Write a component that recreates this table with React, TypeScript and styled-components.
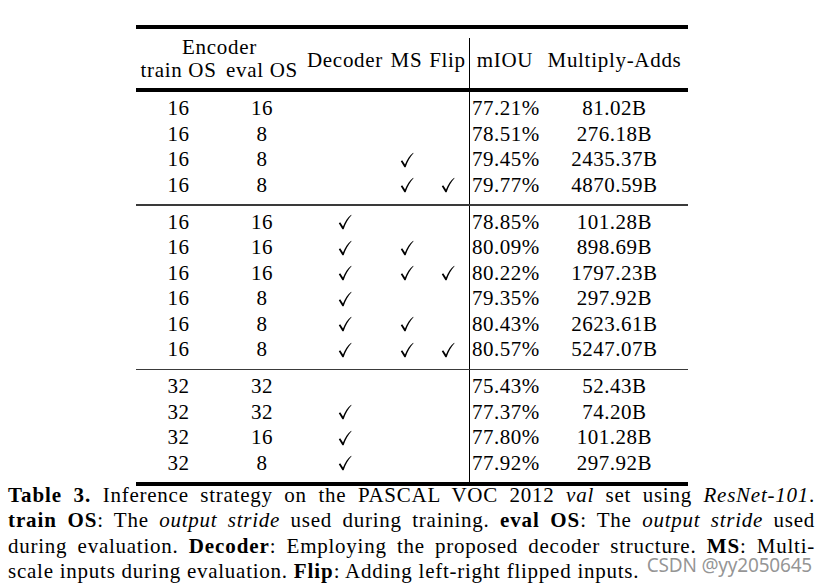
import React from 'react';
import styled, { createGlobalStyle } from 'styled-components';

const GlobalStyle = createGlobalStyle`
  html, body {
    margin: 0;
    padding: 0;
    background: #fff;
  }
  body {
    font-family: 'Liberation Serif', 'DejaVu Serif', serif;
    color: #000;
  }
`;

type Row = {
  train: string;
  evalOs: string;
  decoder?: boolean;
  ms?: boolean;
  flip?: boolean;
  miou: string;
  adds: string;
};

const sections: Row[][] = [
  [
    { train: '16', evalOs: '16', miou: '77.21%', adds: '81.02B' },
    { train: '16', evalOs: '8', miou: '78.51%', adds: '276.18B' },
    { train: '16', evalOs: '8', ms: true, miou: '79.45%', adds: '2435.37B' },
    { train: '16', evalOs: '8', ms: true, flip: true, miou: '79.77%', adds: '4870.59B' },
  ],
  [
    { train: '16', evalOs: '16', decoder: true, miou: '78.85%', adds: '101.28B' },
    { train: '16', evalOs: '16', decoder: true, ms: true, miou: '80.09%', adds: '898.69B' },
    { train: '16', evalOs: '16', decoder: true, ms: true, flip: true, miou: '80.22%', adds: '1797.23B' },
    { train: '16', evalOs: '8', decoder: true, miou: '79.35%', adds: '297.92B' },
    { train: '16', evalOs: '8', decoder: true, ms: true, miou: '80.43%', adds: '2623.61B' },
    { train: '16', evalOs: '8', decoder: true, ms: true, flip: true, miou: '80.57%', adds: '5247.07B' },
  ],
  [
    { train: '32', evalOs: '32', miou: '75.43%', adds: '52.43B' },
    { train: '32', evalOs: '32', decoder: true, miou: '77.37%', adds: '74.20B' },
    { train: '32', evalOs: '16', decoder: true, miou: '77.80%', adds: '101.28B' },
    { train: '32', evalOs: '8', decoder: true, miou: '77.92%', adds: '297.92B' },
  ],
];

const COLS = '85px 82px 84px 39px 43px 72px 147px';

const Page = styled.div`
  position: relative;
  width: 824px;
  height: 588px;
  padding-top: 25px;
  box-sizing: border-box;
  overflow: hidden;
  font-family: 'Liberation Serif', 'DejaVu Serif', serif;
`;

const Table = styled.div`
  width: 552px;
  margin: 0 auto;
  font-size: 21px;
  letter-spacing: 0.5px;
`;

const Rule = styled.div<{ $heavy?: boolean }>`
  height: ${(p) => (p.$heavy ? '4px' : '1.5px')};
  background: ${(p) => (p.$heavy ? '#000' : '#3a3a3a')};
`;

const Header = styled.div`
  display: grid;
  grid-template-columns: ${COLS};
  grid-template-rows: 21px 25px;
  padding: 8px 0 5px;
  letter-spacing: 0.7px;
  background: linear-gradient(#000, #000) no-repeat 333px 9px / 1px 100%;
`;

const HeadCell = styled.div<{ $span?: number; $rows?: number }>`
  grid-column: span ${(p) => p.$span ?? 1};
  grid-row: span ${(p) => p.$rows ?? 1};
  display: flex;
  align-items: center;
  justify-content: center;
  white-space: nowrap;
  line-height: 1;
`;

const Section = styled.div`
  display: grid;
  grid-template-columns: ${COLS};
  grid-auto-rows: 25.5px;
  padding: 4px 0 6px;
  background: linear-gradient(#000, #000) no-repeat 333px 0 / 1px 100%;
`;

const Cell = styled.div<{ $left?: boolean }>`
  display: flex;
  align-items: center;
  justify-content: ${(p) => (p.$left ? 'flex-start' : 'center')};
  padding-left: ${(p) => (p.$left ? '3px' : '0')};
  white-space: nowrap;
`;

const Check = () => (
  <svg width="14" height="16" viewBox="0 0 14 16">
    <path
      d="M0.8 9.2 L2.2 8.3 L5 12.6 C7 7.6 9.6 3.6 13.2 0.8 L13.5 1.2 C10.4 4.5 7.6 9.5 5.6 15.2 L4.4 15.2 Z"
      fill="#000"
    />
  </svg>
);

const Caption = styled.div`
  width: 807px;
  margin: -3px 0 0 8px;
  font-size: 21px;
  line-height: 25.4px;
  letter-spacing: 0.75px;
`;

const CaptionLine = styled.div<{ $last?: boolean }>`
  text-align: ${(p) => (p.$last ? 'left' : 'justify')};
  text-align-last: ${(p) => (p.$last ? 'left' : 'justify')};
  white-space: nowrap;
`;

const Label = styled.b`
  font-weight: 700;
  letter-spacing: 0.9px;
`;

const Watermark = styled.div`
  position: absolute;
  right: 12px;
  top: 552px;
  font-family: 'Noto Sans', 'DejaVu Sans', sans-serif;
  font-size: 19px;
  color: rgba(130, 130, 130, 0.85);
  letter-spacing: -0.2px;
`;

function TableRow({ row }: { row: Row }) {
  return (
    <>
      <Cell>{row.train}</Cell>
      <Cell>{row.evalOs}</Cell>
      <Cell>{row.decoder && <Check />}</Cell>
      <Cell>{row.ms && <Check />}</Cell>
      <Cell>{row.flip && <Check />}</Cell>
      <Cell $left>{row.miou}</Cell>
      <Cell>{row.adds}</Cell>
    </>
  );
}

export default function App() {
  return (
    <Page>
      <GlobalStyle />
      <Table>
        <Rule $heavy />
        <Header>
          <HeadCell $span={2}>Encoder</HeadCell>
          <HeadCell $rows={2}>Decoder</HeadCell>
          <HeadCell $rows={2}>MS</HeadCell>
          <HeadCell $rows={2}>Flip</HeadCell>
          <HeadCell $rows={2}>mIOU</HeadCell>
          <HeadCell $rows={2}>Multiply-Adds</HeadCell>
          <HeadCell>train OS</HeadCell>
          <HeadCell>eval OS</HeadCell>
        </Header>
        <Rule $heavy />
        {sections.map((rows, i) => (
          <React.Fragment key={i}>
            {i > 0 && <Rule />}
            <Section>
              {rows.map((row, j) => (
                <TableRow key={j} row={row} />
              ))}
            </Section>
          </React.Fragment>
        ))}
        <Rule $heavy />
      </Table>
      <Caption>
        <CaptionLine>
          <Label>Table 3.</Label> Inference strategy on the PASCAL VOC 2012 <i>val</i> set using{' '}
          <i>ResNet-101</i>.
        </CaptionLine>
        <CaptionLine>
          <Label>train OS</Label>: The <i>output stride</i> used during training. <Label>eval OS</Label>: The{' '}
          <i>output stride</i> used
        </CaptionLine>
        <CaptionLine>
          during evaluation. <Label>Decoder</Label>: Employing the proposed decoder structure. <Label>MS</Label>:
          Multi-
        </CaptionLine>
        <CaptionLine $last>
          scale inputs during evaluation. <Label>Flip</Label>: Adding left-right flipped inputs.
        </CaptionLine>
      </Caption>
      <Watermark>CSDN @yy2050645</Watermark>
    </Page>
  );
}
